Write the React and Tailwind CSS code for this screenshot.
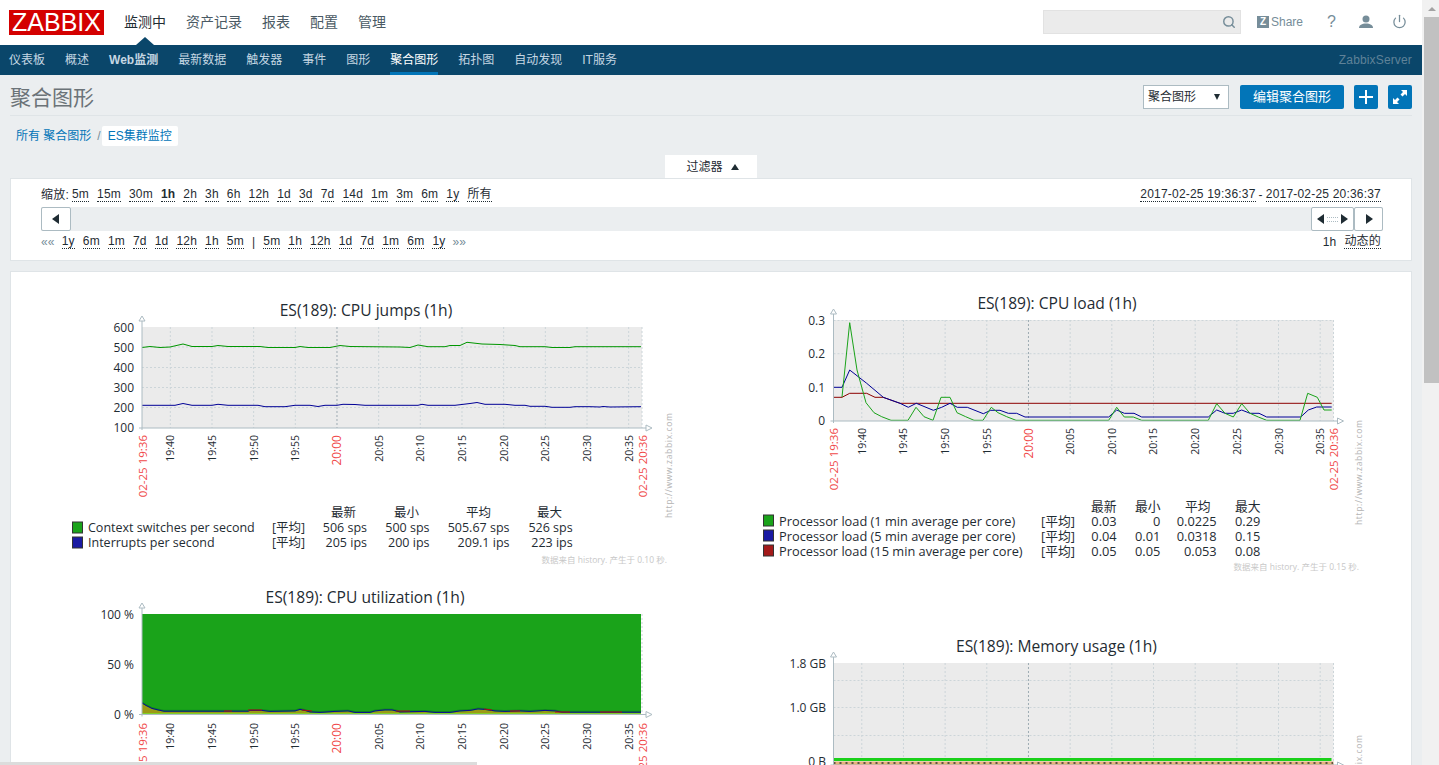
import React from 'react';
import { Search, Power } from 'lucide-react';

const sans = "font-['Liberation_Sans','Noto_Sans_CJK_SC',sans-serif]";
const cjk = "font-['Open_Sans','Noto_Sans_CJK_SC',sans-serif]";

const topMenu = ['监测中', '资产记录', '报表', '配置', '管理'];
const subMenu = ['仪表板', '概述', 'Web监测', '最新数据', '触发器', '事件', '图形', '聚合图形', '拓扑图', '自动发现', 'IT服务'];
const zoomLinks = ['5m', '15m', '30m', '1h', '2h', '3h', '6h', '12h', '1d', '3d', '7d', '14d', '1m', '3m', '6m', '1y', '所有'];
const backLinks = ['1y', '6m', '1m', '7d', '1d', '12h', '1h', '5m'];
const fwdLinks = ['5m', '1h', '12h', '1d', '7d', '1m', '6m', '1y'];
const times = ['19:40', '19:45', '19:50', '19:55', '20:00', '20:05', '20:10', '20:15', '20:20', '20:25', '20:30', '20:35'];

const toPoints = (pts) => pts.map((p) => p.join(',')).join(' ');

const DotLink = ({ children, bold }) => (
  <span className={`border-b border-dotted border-[#1f2c33] leading-[13px] ${bold ? 'font-bold' : ''}`}>{children}</span>
);

const Arrow = ({ dir }) => (
  <svg width="8" height="10" viewBox="0 0 8 10" className="shrink-0">
    <path d={dir === 'left' ? 'M7 0v10L0 5z' : 'M1 0v10l7-5z'} fill="#1f2c33" />
  </svg>
);

// axes, grid and time labels shared by all four graphs
const Plot = ({ x0, top, bottom, hLines, labelY, fill = '#ebebeb', showGrid = true, showTimes = true, children }) => {
  const right = x0 + 500;
  return (
    <g>
      <rect x={x0} y={top} width={500} height={bottom - top} fill={fill} />
      {showGrid && hLines.map((y) => (
        <line key={y} x1={x0} x2={right} y1={y} y2={y} stroke="#ccd5d9" strokeDasharray="2 2" />
      ))}
      {showGrid && times.map((t, i) => (
        <line key={t} x1={x0 + 28.3 + 41.67 * i} x2={x0 + 28.3 + 41.67 * i} y1={top} y2={bottom} stroke={t === '20:00' ? '#9eabb2' : '#ccd5d9'} strokeDasharray="2 2" />
      ))}
      <line x1={right} x2={right} y1={top} y2={bottom} stroke="#ccd5d9" strokeDasharray="2 2" />
      {children}
      <line x1={x0} x2={x0} y1={top - 6} y2={bottom + 2} stroke="#acbbc2" />
      <line x1={x0 - 3} x2={right + 4} y1={bottom} y2={bottom} stroke="#acbbc2" />
      <path d={`M${x0 - 3} ${top - 6}l3 -5l3 5z`} fill="#fff" stroke="#acbbc2" />
      <path d={`M${right + 4} ${bottom - 3}l6 3l-6 3z`} fill="#fff" stroke="#acbbc2" />
      {showTimes && times.map((t, i) => (
        <text key={t} x={x0 + 28.3 + 41.67 * i} y={labelY} transform={`rotate(-90 ${x0 + 28.3 + 41.67 * i} ${labelY})`} textAnchor="end" dominantBaseline="central" fontSize={t === '20:00' ? 12 : 10.5} fill={t === '20:00' ? '#f04848' : '#1f2c33'}>{t}</text>
      ))}
      {showTimes && (
        <>
          <text x={x0} y={labelY} transform={`rotate(-90 ${x0} ${labelY})`} textAnchor="end" dominantBaseline="central" fontSize="11.5" fill="#f04848">02-25 19:36</text>
          <text x={right} y={labelY} transform={`rotate(-90 ${right} ${labelY})`} textAnchor="end" dominantBaseline="central" fontSize="11.5" fill="#f04848">02-25 20:36</text>
        </>
      )}
    </g>
  );
};

const YLabels = ({ x, items }) => items.map(([label, y]) => (
  <text key={label} x={x} y={y} textAnchor="end" dominantBaseline="central" fontSize="12" fill="#1f2c33">{label}</text>
));

const Title = ({ x, y, children }) => (
  <text x={x} y={y} textAnchor="middle" dominantBaseline="central" fontSize="15.6" fill="#1f2c33">{children}</text>
);

const Site = ({ x, top, bottom }) => (
  <text x={x} y={top} transform={`rotate(-90 ${x} ${top})`} textAnchor="end" dominantBaseline="central" fontSize="8.5" fill="#b4b4b4" textLength={bottom - top}>http://www.zabbix.com</text>
);

const Legend = ({ rows, boxX, textX, tagX, y, cols, heads, fontSize = 12.5 }) => (
  <g fontSize={fontSize} fill="#1f2c33">
    {heads.map(([label, hx]) => (
      <text key={label} x={hx} y={y - 15} dominantBaseline="central">{label}</text>
    ))}
    {rows.map((row, i) => (
      <g key={row.name}>
        <rect x={boxX + 0.5} y={y + 15 * i - 5.5} width="10" height="11" fill={row.color} stroke="#333" />
        <text x={textX} y={y + 15 * i} dominantBaseline="central">{row.name}</text>
        <text x={tagX} y={y + 15 * i} dominantBaseline="central">[平均]</text>
        {row.vals.map((v, j) => (
          <text key={j} x={cols[j]} y={y + 15 * i} textAnchor="end" dominantBaseline="central">{v}</text>
        ))}
      </g>
    ))}
  </g>
);

const jumpsGreen = [[142,347.5],[150,346.5],[160,347.5],[170,347],[183,344],[192,346.5],[212,346.5],[218,345.5],[228,346.5],[260,346.5],[268,347.5],[295,347.5],[300,346.5],[308,347.5],[330,347.5],[340,345.5],[350,346.5],[400,347],[410,347.5],[418,345],[428,346.7],[445,346.7],[450,345.5],[460,345.5],[467,342.3],[482,344],[500,344.5],[515,345.5],[520,346.7],[545,346.7],[552,347.5],[570,347.5],[575,346.7],[641,346.7]];
const jumpsBlue = [[142,405.3],[175,405.3],[183,403.5],[192,405.3],[212,405.3],[218,404.3],[228,405.3],[258,405.3],[265,406.7],[285,406.7],[295,405.3],[310,405.3],[318,406.5],[325,405.3],[337,405.3],[343,404.3],[355,404.5],[365,405.3],[418,405.3],[422,404.3],[428,405.3],[455,405.3],[470,403.5],[477,402.5],[485,404.3],[505,404.3],[515,405.3],[525,405.3],[530,406.3],[545,406.3],[552,407.3],[570,407.3],[575,406.7],[590,406.7],[600,407],[603,406.5],[610,407],[641,406.7]];

const loadGreen = [[842,397],[849.7,322.7],[857,370],[866,402.7],[874,412.7],[881.7,416.7],[891,420.3],[908,420.3],[916,407.3],[924,416.7],[933,420.3],[941,397.3],[950,397.3],[957,412.7],[965.7,416.7],[974,420.3],[983,420.3],[991.3,407.3],[998,412.7],[1006.7,416.7],[1016,420.3],[1108.7,420.3],[1116.7,407.3],[1124.3,417],[1133.3,417],[1141.7,420.3],[1208.3,420.3],[1216.7,403.7],[1225,413.3],[1233.3,417],[1241.7,403.7],[1250,413.3],[1258.3,417],[1266.7,420.3],[1300,420.3],[1307.7,393.3],[1317.3,397.3],[1324,410],[1331.7,410]];
const loadBlue = [[833.7,387.3],[842,387.3],[849.7,370],[866.7,383.3],[883.3,397.3],[900,403.3],[908.3,407.3],[916.3,403.3],[933.3,410.3],[941.7,407.3],[950,403.3],[957.3,407.3],[967.3,407.3],[983.3,413.7],[990.7,410.3],[1000,410.3],[1008.3,413.3],[1016.7,413.3],[1025,417],[1108.7,417],[1116.7,410],[1124.3,413.3],[1134,413.3],[1141.7,417],[1208.3,417],[1216.7,410],[1225,413.3],[1233.3,413.3],[1241.7,410],[1250,413.3],[1259,413.3],[1266.7,417],[1300.7,417],[1308.3,410],[1316.7,407],[1331.7,407]];
const loadRed = [[833.7,397.3],[842,397.3],[849.7,393.3],[866.7,393.3],[875,397.3],[883,397.3],[900,403.3],[1331.7,403.3]];

const utilTop = [[142,703.5],[146,706],[152,709],[158,710.5],[164,711.8],[248,711.8],[250,711],[262,711],[270,712],[295,711.5],[300,710],[305,711],[310,712.5],[320,713],[335,712],[348,711.5],[355,713],[370,713],[375,711.5],[385,710.5],[392,710.5],[400,712.5],[425,712],[435,713],[450,713],[460,711.5],[470,711],[478,709.5],[485,710],[495,711.5],[505,712],[520,711.5],[530,712],[545,711],[555,711.5],[562,712.8],[641,712.8]];
const utilRed = [[224,711,232,711],[248,710,262,710],[302,710,312,711],[396,711,410,711],[484,709,492,710],[510,711,520,711],[555,712,570,712],[600,712,622,712]];

const GraphJumps = () => (
  <svg viewBox="60 290 620 290" width="620" height="290" className={`block ${cjk}`}>
    <Title x={366} y={310}>ES(189): CPU jumps (1h)</Title>
    <YLabels x={134} items={[['600', 327], ['500', 347], ['400', 367], ['300', 387], ['200', 407], ['100', 427]]} />
    <Plot x0={142} top={327} bottom={428} hLines={[347, 367.5, 387.5, 407.5]} labelY={435}>
      <polyline points={toPoints(jumpsGreen)} fill="none" stroke="#009600" />
      <polyline points={toPoints(jumpsBlue)} fill="none" stroke="#000096" />
    </Plot>
    <Site x={668} top={413} bottom={518} />
    <Legend
      y={527.5} boxX={72} textX={88} tagX={272}
      heads={[['最新', 331], ['最小', 394], ['平均', 466], ['最大', 537]]}
      cols={[367, 429.5, 509.5, 572.7]}
      rows={[
        { name: 'Context switches per second', color: '#1aa31a', vals: ['506 sps', '500 sps', '505.67 sps', '526 sps'] },
        { name: 'Interrupts per second', color: '#1a1aa3', vals: ['205 ips', '200 ips', '209.1 ips', '223 ips'] },
      ]}
    />
    <text x={667} y={559} textAnchor="end" dominantBaseline="central" fontSize="8.5" fill="#c8c8c8">数据来自 history. 产生于 0.10 秒.</text>
  </svg>
);

const GraphUtil = () => (
  <svg viewBox="60 580 620 190" width="620" height="190" className={`block ${cjk}`}>
    <Title x={365} y={597}>ES(189): CPU utilization (1h)</Title>
    <YLabels x={134} items={[['100 %', 614], ['50 %', 664], ['0 %', 714]]} />
    <Plot x0={142} top={614} bottom={714.5} hLines={[]} labelY={723} fill="#ffffff">
      <rect x={142} y={614} width={499} height={100} fill="#1aa31a" />
      <polygon points={`${toPoints(utilTop)} 641,713 142,713`} fill="#9c9a16" />
      <polyline points={toPoints(utilTop.map(([x, y]) => [x, y - 1.5]))} fill="none" stroke="#0e8a1a" />
      <polyline points={toPoints(utilTop.map(([x, y]) => [x, y - 0.6]))} fill="none" stroke="#0a0a96" />
      {utilRed.map(([a, b, c, d]) => (
        <line key={a} x1={a} y1={b} x2={c} y2={d} stroke="#b01010" />
      ))}
      <rect x={142} y={713} width={499} height={1} fill="#7fd02a" />
    </Plot>
  </svg>
);

const GraphLoad = () => (
  <svg viewBox="750 285 620 345" width="620" height="345" className={`block ${cjk}`}>
    <Title x={1057} y={303}>ES(189): CPU load (1h)</Title>
    <YLabels x={825} items={[['0.3', 320], ['0.2', 353.5], ['0.1', 387], ['0', 420.5]]} />
    <Plot x0={833.5} top={320} bottom={421} hLines={[320.5, 353.7, 387.3]} labelY={428}>
      <polyline points={toPoints(loadRed)} fill="none" stroke="#8c0000" />
      <polyline points={toPoints(loadBlue)} fill="none" stroke="#000096" />
      <polyline points={toPoints(loadGreen)} fill="none" stroke="#1aa31a" />
    </Plot>
    <Site x={1358} top={420} bottom={525} />
    <Legend
      y={520.5} boxX={763} textX={779} tagX={1041} fontSize={12.8}
      heads={[['最新', 1091], ['最小', 1135], ['平均', 1185], ['最大', 1235]]}
      cols={[1116.7, 1160.3, 1216.7, 1260.3]}
      rows={[
        { name: 'Processor load (1 min average per core)', color: '#1aa31a', vals: ['0.03', '0', '0.0225', '0.29'] },
        { name: 'Processor load (5 min average per core)', color: '#1a1aa3', vals: ['0.04', '0.01', '0.0318', '0.15'] },
        { name: 'Processor load (15 min average per core)', color: '#a31a1a', vals: ['0.05', '0.05', '0.053', '0.08'] },
      ]}
    />
    <text x={1359} y={566} textAnchor="end" dominantBaseline="central" fontSize="8.5" fill="#c8c8c8">数据来自 history. 产生于 0.15 秒.</text>
  </svg>
);

const GraphMemory = () => (
  <svg viewBox="750 630 620 140" width="620" height="140" className={`block ${cjk}`}>
    <Title x={1056.5} y={646}>ES(189): Memory usage (1h)</Title>
    <YLabels x={826} items={[['1.8 GB', 663], ['1.0 GB', 707], ['0 B', 761]]} />
    <Plot x0={833.5} top={663} bottom={765} hLines={[680.5, 707.5, 735.5]} labelY={775} showTimes={false}>
      <rect x={833.5} y={758} width={498} height={3} fill="#1ad01a" />
      <rect x={833.5} y={761.5} width={500} height={5} fill="#e8b27c" />
      <line x1={833.5} x2={1333} y1={763} y2={763} stroke="#333" strokeWidth="1.5" strokeDasharray="2 4" />
    </Plot>
    <Site x={1358} top={735} bottom={840} />
  </svg>
);

const App = () => {
  return (
    <div className={`relative flex h-screen w-full overflow-hidden bg-[#ebeef0] text-xs text-[#1f2c33] ${sans}`}>
      <div className="flex w-[1422px] shrink-0 flex-col">
        <header className="relative flex h-[45px] shrink-0 items-center bg-white pl-[9px] pr-[15px]">
          <div className="flex h-[25px] w-[95px] items-center justify-center bg-[#d40000] text-[25px] leading-none text-white">ZABBIX</div>
          <nav className="mb-[2px] ml-[10px] flex text-sm text-[#4a5a64]">
            {topMenu.map((m, i) => (
              <span key={m} className={`px-[10px] ${i === 0 ? 'text-[#1f2c33]' : ''}`}>{m}</span>
            ))}
          </nav>
          <span className="absolute bottom-0 left-[136px] h-0 w-0 border-x-[9px] border-b-[8px] border-x-transparent border-b-[#0a466a]" />
          <div className="mb-[2px] ml-auto flex items-center">
            <div className="flex h-[24px] w-[198px] items-center justify-end border border-[#e2e2e2] bg-[#ebebeb] pr-[4px] text-[#768d99]">
              <Search size={14} strokeWidth={2.5} />
            </div>
            <div className="ml-[16px] flex w-[47px] items-center gap-[2px] text-[#768d99]">
              <span className="flex h-[12px] w-[12px] items-center justify-center bg-[#768d99] text-[10px] font-bold leading-none text-white">Z</span>
              <span>Share</span>
            </div>
            <span className="ml-[23px] w-[10px] text-base text-[#768d99]">?</span>
            <svg className="ml-[22px]" width="14" height="14" viewBox="0 0 14 14" fill="#768d99">
              <circle cx="7" cy="4" r="3.5" />
              <path d="M0 13c0-3 3-4.5 7-4.5s7 1.500 7 4.500z" />
            </svg>
            <Power className="ml-[19px] text-[#768d99]" size={15} strokeWidth={2} />
          </div>
        </header>

        <nav className="flex h-[30px] shrink-0 items-stretch bg-[#0a466a] pr-[10px] text-[#c5d7e3]">
          <div className="-ml-px flex">
            {subMenu.map((m) => (
              <span key={m} className={`mx-[10px] flex items-center border-b-[3px] pt-[3px] ${m === '聚合图形' ? 'border-[#0275b8] text-white' : 'border-transparent'} ${m === 'Web监测' ? 'font-bold' : ''}`}>{m}</span>
            ))}
          </div>
          <span className="ml-auto flex items-center tracking-[0.15px] text-[#5f8298]">ZabbixServer</span>
        </nav>

        <main className="flex shrink-0 flex-col px-[10px]">
          <div className="flex h-[41px] shrink-0 items-center justify-between border-b border-[#dfe4e7] pt-[4px]">
            <h1 className="text-[21px] font-normal leading-none text-[#6b7378]">聚合图形</h1>
            <div className="flex items-center">
              <div className="flex h-[24px] w-[86px] items-center justify-between border border-[#acbbc2] bg-white pl-[4px] pr-[8px]">
                <span>聚合图形</span>
                <span className="h-0 w-0 border-x-[3.5px] border-t-[6px] border-x-transparent border-t-[#1f2c33]" />
              </div>
              <button className="ml-[11px] h-[24px] w-[104px] rounded-[2px] bg-[#0275b8] text-[13px] text-white">编辑聚合图形</button>
              <button className="ml-[10px] flex h-[24px] w-[24px] items-center justify-center rounded-[2px] bg-[#0275b8]">
                <svg width="14" height="14" viewBox="0 0 14 14"><path d="M6 0h2v6h6v2H8v6H6V8H0V6h6z" fill="#fff" /></svg>
              </button>
              <button className="ml-[10px] flex h-[24px] w-[24px] items-center justify-center rounded-[2px] bg-[#0275b8]">
                <svg width="14" height="14" viewBox="0 0 14 14" fill="#fff">
                  <path d="M8 0h6v6l-2-2-2.500 2.500-2-2L10 2z" />
                  <path d="M6 14H0V8l2 2 2.500-2.500 2 2L4 12z" />
                </svg>
              </button>
            </div>
          </div>

          <div className="mt-[10px] flex h-[20px] items-center pl-[6px] text-[#0275b8]">
            <span>所有 聚合图形</span>
            <span className="ml-[6px] text-[#768d99]">/</span>
            <span className="ml-[1px] flex h-[20px] w-[76px] items-center justify-center rounded-[2px] bg-white">ES集群监控</span>
          </div>

          <div className="mt-[9px] flex justify-center">
            <div className="ml-[-1px] flex h-[23px] w-[92px] items-center justify-center gap-[8px] bg-white pl-[4px]">
              <span>过滤器</span>
              <span className="h-0 w-0 border-x-[4px] border-b-[6px] border-x-transparent border-b-[#1f2c33]" />
            </div>
          </div>

          <section className="h-[83px] shrink-0 border border-[#dfe4e7] bg-white pl-[30px] pr-[28px] tracking-[0.2px]">
            <div className="flex h-[28px] items-center justify-between pt-[3px]">
              <div className="flex items-center gap-[8px]">
                <span className="-mr-[5px]">缩放:</span>
                {zoomLinks.map((z) => (
                  <DotLink key={z} bold={z === '1h'}>{z}</DotLink>
                ))}
              </div>
              <div className="flex items-center gap-[3px] pr-[2px]">
                <DotLink>2017-02-25 19:36:37</DotLink>
                <span>-</span>
                <DotLink>2017-02-25 20:36:37</DotLink>
              </div>
            </div>
            <div className="flex h-[24px] items-stretch justify-between bg-[#ebeef0]">
              <button className="flex w-[30px] items-center justify-center rounded-[2px] border border-[#acbbc2] bg-white"><Arrow dir="left" /></button>
              <div className="flex">
                <button className="flex w-[43px] items-center justify-center gap-[2px] rounded-[2px] border border-[#acbbc2] bg-white">
                  <Arrow dir="left" />
                  <span className="h-[5px] w-[11px] border-y border-dotted border-[#acbbc2]" />
                  <Arrow dir="right" />
                </button>
                <button className="flex w-[29px] items-center justify-center rounded-[2px] border border-[#acbbc2] bg-white"><Arrow dir="right" /></button>
              </div>
            </div>
            <div className="flex h-[22px] items-center justify-between">
              <div className="flex items-center gap-[8px]">
                <span className="-mr-[1px] text-[#768d99]">««</span>
                {backLinks.map((b, i) => (
                  <DotLink key={i}>{b}</DotLink>
                ))}
                <span>|</span>
                {fwdLinks.map((b, i) => (
                  <DotLink key={i}>{b}</DotLink>
                ))}
                <span className="-ml-[1px] text-[#768d99]">»»</span>
              </div>
              <div className="flex items-center gap-[8px] pr-[2px]">
                <span>1h</span>
                <DotLink>动态的</DotLink>
              </div>
            </div>
          </section>

          <section className="mt-[10px] flex shrink-0 border border-[#dfe4e7] bg-white">
            <div className="w-[690px] shrink-0 pl-[49px] pt-[18px]">
              <GraphJumps />
              <GraphUtil />
            </div>
            <div className="pl-[49px] pt-[13px]">
              <GraphLoad />
              <GraphMemory />
            </div>
          </section>
        </main>
      </div>

      <div className="flex h-full w-[17px] shrink-0 flex-col items-end bg-[#f1f1f1]">
        <div className="flex h-[17px] w-[15px] items-center justify-center">
          <span className="h-0 w-0 border-x-[4px] border-b-[4px] border-x-transparent border-b-[#a3a3a3]" />
        </div>
        <div className="h-[366px] w-[15px] shrink-0 bg-[#c1c1c1]" />
      </div>

      <div className="absolute bottom-0 left-0 h-[3px] w-[477px] bg-[#dcdcdc]" />
    </div>
  );
};

export default App;
